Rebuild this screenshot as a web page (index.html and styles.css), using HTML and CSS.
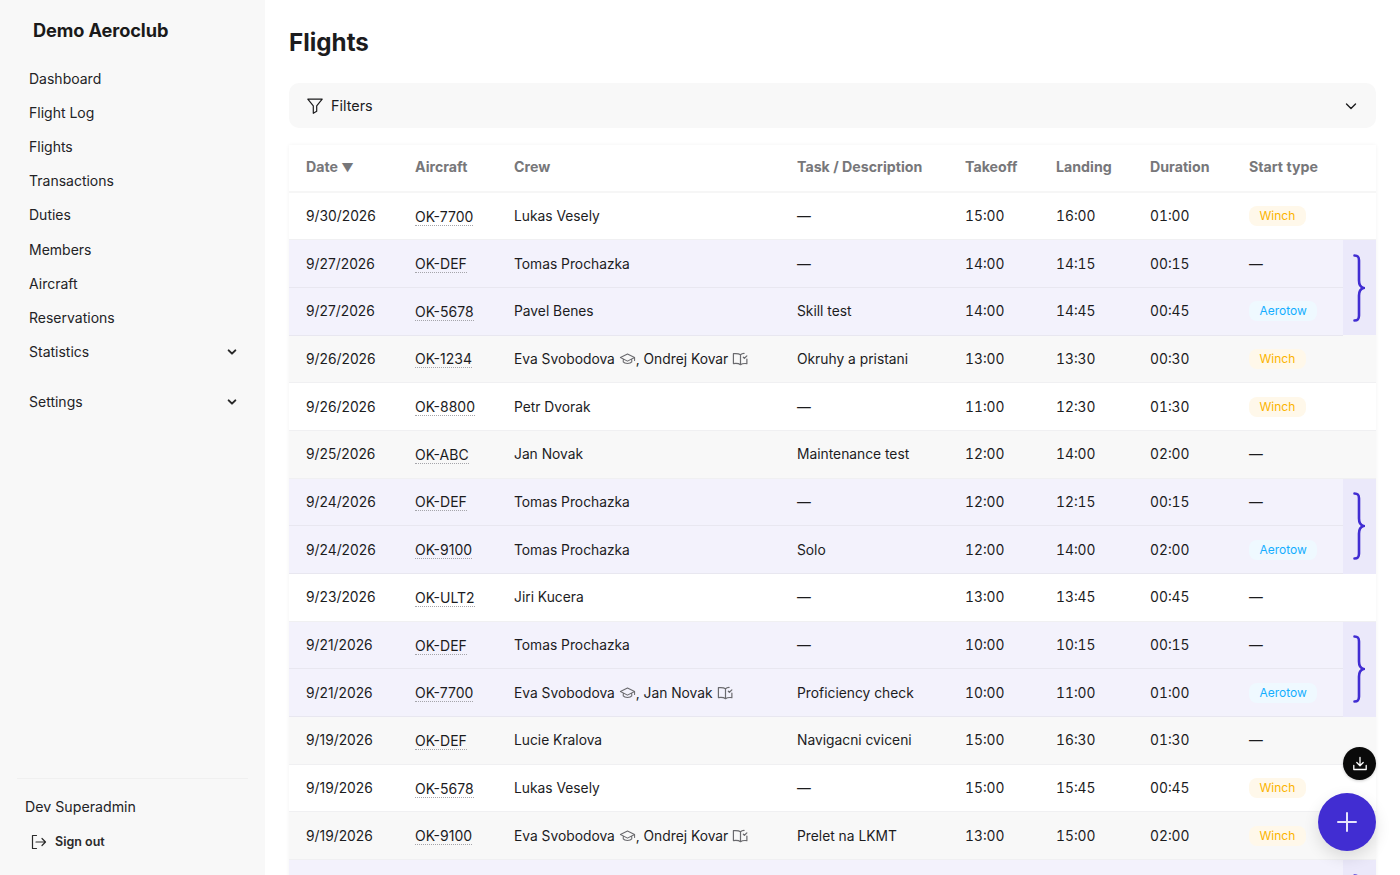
FILE: index.html
```html
<!DOCTYPE html>
<html lang="en">
<head>
<meta charset="utf-8">
<title>Flights</title>
<link rel="stylesheet" href="styles.css">
</head>
<body>
<svg class="defs" width="0" height="0" aria-hidden="true">
  <symbol id="grad" viewBox="0 0 24 24"><path d="M22 10 12 5 2 10l10 5 10-5Z M6 12.200V16c2 3 10 3 12 0v-3.800 M22 10v4" fill="none" stroke="currentColor" stroke-width="1.500" stroke-linejoin="round" stroke-linecap="round"/></symbol>
  <symbol id="book" viewBox="0 0 24 24"><path d="M12 6C10 4.500 6 4 2 4.500v14c4-.5 8 0 10 1.500 2-1.500 4-2 9-1.500V12 M12 6v14 M12 6c1.500-1.200 3.500-1.700 5-1.800 M16 9.500l1.500 1.500L21 7.500" fill="none" stroke="currentColor" stroke-width="1.700" stroke-linejoin="round" stroke-linecap="round"/></symbol>
  <symbol id="brace" viewBox="0 0 12 68"><path d="M1.500 1.500c3.500 0 4.500 1.500 4.500 5v20c0 4 1 6.500 4.500 7.500-3.500 1-4.500 3.500-4.500 7.500v20c0 3.500-1 5-4.500 5" fill="none" stroke="currentColor" stroke-width="2.600" stroke-linecap="round"/></symbol>
  <symbol id="chev" viewBox="0 0 12 12"><path d="M2 4l4 4 4-4" fill="none" stroke="currentColor" stroke-width="2.400" stroke-linecap="round" stroke-linejoin="round"/></symbol>
</svg>
<div class="app">
  <aside class="sidebar">
    <div class="brand">Demo Aeroclub</div>
    <nav class="nav">
      <a class="nav-item">Dashboard</a>
      <a class="nav-item">Flight Log</a>
      <a class="nav-item">Flights</a>
      <a class="nav-item">Transactions</a>
      <a class="nav-item">Duties</a>
      <a class="nav-item">Members</a>
      <a class="nav-item">Aircraft</a>
      <a class="nav-item">Reservations</a>
      <a class="nav-item">Statistics<svg class="nav-chev"><use href="#chev"/></svg></a>
      <a class="nav-item nav-gap">Settings<svg class="nav-chev"><use href="#chev"/></svg></a>
    </nav>
    <div class="user">
      <div class="user-name">Dev Superadmin</div>
      <a class="signout">
        <svg class="signout-icon" viewBox="0 0 16 16"><path d="M5.500 1.500H1.500v13h4 M5 8h9.500 M11 4.500 14.500 8 11 11.500" fill="none" stroke="currentColor" stroke-width="1.200" stroke-linecap="round" stroke-linejoin="round"/></svg>
        Sign out
      </a>
    </div>
  </aside>
  <main class="main">
    <h1 class="title">Flights</h1>
    <div class="filters">
      <svg class="filter-icon" viewBox="0 0 16 16"><path d="M.8 1.200h14.400L9.700 7.800v5.500l-3.400 2V7.800L.8 1.200Z" fill="none" stroke="currentColor" stroke-width="1.200" stroke-linejoin="round"/></svg>
      <span class="filter-label">Filters</span>
      <svg class="filter-chev" viewBox="0 0 12 12"><path d="M1.500 4 6 8.500 10.500 4" fill="none" stroke="currentColor" stroke-width="1.400" stroke-linecap="round" stroke-linejoin="round"/></svg>
    </div>
    <div class="card">
      <table class="table">
        <colgroup>
          <col class="c-date"><col class="c-ac"><col class="c-crew"><col class="c-task"><col class="c-off"><col class="c-land"><col class="c-dur"><col class="c-start"><col class="c-br">
        </colgroup>
        <thead>
          <tr><th>Date <span class="sort">▼</span></th><th>Aircraft</th><th>Crew</th><th>Task / Description</th><th>Takeoff</th><th>Landing</th><th>Duration</th><th>Start type</th><th></th></tr>
        </thead>
        <tbody>
          <tr><td>9/30/2026</td><td><span class="ac">OK-7700</span></td><td>Lukas Vesely</td><td>—</td><td class="t">15:00</td><td class="t">16:00</td><td class="t">01:00</td><td><span class="badge winch">Winch</span></td><td></td></tr>
          <tr class="grp"><td>9/27/2026</td><td><span class="ac">OK-DEF</span></td><td>Tomas Prochazka</td><td>—</td><td class="t">14:00</td><td class="t">14:15</td><td class="t">00:15</td><td>—</td><td class="br" rowspan="2"><svg class="brace"><use href="#brace"/></svg></td></tr>
          <tr class="grp"><td>9/27/2026</td><td><span class="ac">OK-5678</span></td><td>Pavel Benes</td><td>Skill test</td><td class="t">14:00</td><td class="t">14:45</td><td class="t">00:45</td><td><span class="badge aero">Aerotow</span></td></tr>
          <tr class="alt"><td>9/26/2026</td><td><span class="ac">OK-1234</span></td><td>Eva Svobodova <svg class="ic"><use href="#grad"/></svg>, Ondrej Kovar <svg class="ic"><use href="#book"/></svg></td><td>Okruhy a pristani</td><td class="t">13:00</td><td class="t">13:30</td><td class="t">00:30</td><td><span class="badge winch">Winch</span></td><td></td></tr>
          <tr><td>9/26/2026</td><td><span class="ac">OK-8800</span></td><td>Petr Dvorak</td><td>—</td><td class="t">11:00</td><td class="t">12:30</td><td class="t">01:30</td><td><span class="badge winch">Winch</span></td><td></td></tr>
          <tr class="alt"><td>9/25/2026</td><td><span class="ac">OK-ABC</span></td><td>Jan Novak</td><td>Maintenance test</td><td class="t">12:00</td><td class="t">14:00</td><td class="t">02:00</td><td>—</td><td></td></tr>
          <tr class="grp"><td>9/24/2026</td><td><span class="ac">OK-DEF</span></td><td>Tomas Prochazka</td><td>—</td><td class="t">12:00</td><td class="t">12:15</td><td class="t">00:15</td><td>—</td><td class="br" rowspan="2"><svg class="brace"><use href="#brace"/></svg></td></tr>
          <tr class="grp"><td>9/24/2026</td><td><span class="ac">OK-9100</span></td><td>Tomas Prochazka</td><td>Solo</td><td class="t">12:00</td><td class="t">14:00</td><td class="t">02:00</td><td><span class="badge aero">Aerotow</span></td></tr>
          <tr><td>9/23/2026</td><td><span class="ac">OK-ULT2</span></td><td>Jiri Kucera</td><td>—</td><td class="t">13:00</td><td class="t">13:45</td><td class="t">00:45</td><td>—</td><td></td></tr>
          <tr class="grp"><td>9/21/2026</td><td><span class="ac">OK-DEF</span></td><td>Tomas Prochazka</td><td>—</td><td class="t">10:00</td><td class="t">10:15</td><td class="t">00:15</td><td>—</td><td class="br" rowspan="2"><svg class="brace"><use href="#brace"/></svg></td></tr>
          <tr class="grp"><td>9/21/2026</td><td><span class="ac">OK-7700</span></td><td>Eva Svobodova <svg class="ic"><use href="#grad"/></svg>, Jan Novak <svg class="ic"><use href="#book"/></svg></td><td>Proficiency check</td><td class="t">10:00</td><td class="t">11:00</td><td class="t">01:00</td><td><span class="badge aero">Aerotow</span></td></tr>
          <tr class="alt"><td>9/19/2026</td><td><span class="ac">OK-DEF</span></td><td>Lucie Kralova</td><td>Navigacni cviceni</td><td class="t">15:00</td><td class="t">16:30</td><td class="t">01:30</td><td>—</td><td></td></tr>
          <tr><td>9/19/2026</td><td><span class="ac">OK-5678</span></td><td>Lukas Vesely</td><td>—</td><td class="t">15:00</td><td class="t">15:45</td><td class="t">00:45</td><td><span class="badge winch">Winch</span></td><td></td></tr>
          <tr class="alt"><td>9/19/2026</td><td><span class="ac">OK-9100</span></td><td>Eva Svobodova <svg class="ic"><use href="#grad"/></svg>, Ondrej Kovar <svg class="ic"><use href="#book"/></svg></td><td>Prelet na LKMT</td><td class="t">13:00</td><td class="t">15:00</td><td class="t">02:00</td><td><span class="badge winch">Winch</span></td><td></td></tr>
          <tr class="grp"><td></td><td></td><td></td><td></td><td></td><td></td><td></td><td></td><td class="br" rowspan="2"><svg class="brace"><use href="#brace"/></svg></td></tr>
          <tr class="grp"><td></td><td></td><td></td><td></td><td></td><td></td><td></td><td></td></tr>
        </tbody>
      </table>
    </div>
  </main>
</div>
<button class="fab-dl" aria-label="Download">
  <svg viewBox="0 0 16 16"><path d="M8 1.500v8 M4.800 6.500 8 9.700l3.200-3.200 M1.800 9.500v4h12.400v-4" fill="none" stroke="currentColor" stroke-width="1.300" stroke-linecap="round" stroke-linejoin="round"/></svg>
</button>
<button class="fab-add" aria-label="Add">
  <svg viewBox="0 0 20 20"><path d="M10 1v18 M1 10h18" fill="none" stroke="currentColor" stroke-width="2" stroke-linecap="round"/></svg>
</button>
</body>
</html>
```
FILE: styles.css
```css
* { box-sizing: border-box; }
html, body { margin: 0; height: 100%; overflow: hidden; }
body { font-family: Inter, "Liberation Sans", sans-serif; font-size: 14px; color: #1c1c1e; background: #fff; }
.defs { position: absolute; }
.app { display: flex; height: 875px; }

.sidebar { width: 265px; flex: none; background: #f8f8f8; display: flex; flex-direction: column; padding: 0 17px; }
.brand { font-size: 18.2px; font-weight: 700; padding: 18px 0 0 16px; line-height: 24px; color: #1a1a1a; letter-spacing: -.1px; }
.nav { display: flex; flex-direction: column; margin-top: 19px; }
.nav-item { display: flex; align-items: center; justify-content: space-between; height: 34.2px; padding: 0 11px 0 12px; color: #232326; }
.nav-gap { margin-top: 16px; }
.nav-chev { width: 10px; height: 10px; color: #2a2a2a; }
.user { margin-top: auto; border-top: 1px solid #f0f0f0; padding: 18px 0 0 8px; height: 97px; }
.user-name { font-size: 14.2px; line-height: 20px; color: #232326; }
.signout { display: flex; align-items: center; margin: 15px 0 0 6px; font-size: 12.5px; font-weight: 600; color: #2a2a2a; line-height: 20px; }
.signout-icon { width: 16px; height: 16px; margin-right: 8px; }

.main { flex: 1; padding: 0 24px; min-width: 0; }
.title { margin: 0; padding-top: 27px; font-size: 24.2px; line-height: 32px; font-weight: 700; color: #1c1c1e; }
.filters { display: flex; align-items: center; height: 45px; margin-top: 24px; background: #f8f8f8; border-radius: 10px; padding: 0 19px 0 18px; }
.filter-icon { width: 16px; height: 16px; margin-right: 8px; }
.filter-label { font-size: 14.4px; }
.filter-chev { width: 12px; height: 12px; margin-left: auto; }

.card { margin-top: 17px; box-shadow: 0 0 4px rgba(0,0,0,.05); }
.table { width: 1087px; table-layout: fixed; border-collapse: collapse; }
.c-date { width: 109px; } .c-ac { width: 99px; } .c-crew { width: 283px; } .c-task { width: 168px; }
.c-off { width: 91px; } .c-land { width: 94px; } .c-dur { width: 99px; } .c-start { width: 111px; } .c-br { width: 33px; }
th { text-align: left; font-size: 14.2px; font-weight: 700; color: #77777a; height: 47px; padding: 0 0 4px 17px; border-bottom: 2px solid #f6f6f6; }
.sort { font-size: 12px; }
td { height: 47.7px; font-size: 13.8px; padding: 0 0 0 17px; border-bottom: 1px solid #f0f0f2; white-space: nowrap; }
.t { font-variant-numeric: tabular-nums; }
.alt td { background: #f8f8f8; }
.grp td { background: #f3f2fc; border-bottom-color: #e8e7f0; }
.grp td.br { background: #ebe9fa; padding: 0; text-align: center; vertical-align: middle; border-bottom: 0; color: #412dd2; }
.brace { width: 12px; height: 68px; display: block; margin: 0 0 0 10px; }
.ac { font-size: 14px; border-bottom: 1px dotted #a5a5aa; }
.ic { width: 17px; height: 18px; vertical-align: -4px; color: #6a6a6e; }
.badge { display: inline-block; font-size: 12px; line-height: 20px; padding: 0 10.5px; border-radius: 8px; vertical-align: -1px; }
.winch { background: #fff8ea; color: #fbb400; }
.aero { background: #eff9ff; color: #14aeff; }

.fab-dl, .fab-add { position: fixed; border: 0; border-radius: 50%; padding: 0; display: flex; align-items: center; justify-content: center; }
.fab-dl { left: 1343px; top: 747px; width: 33px; height: 33px; background: #0a0a0a; color: #fff; box-shadow: 0 1px 3px rgba(0,0,0,.2); }
.fab-dl svg { width: 16px; height: 16px; }
.fab-add { left: 1318px; top: 793px; width: 58px; height: 58px; background: #412dd2; color: #e6e4fb; box-shadow: 0 6px 16px rgba(0,0,0,.12); }
.fab-add svg { width: 20px; height: 20px; }
```
